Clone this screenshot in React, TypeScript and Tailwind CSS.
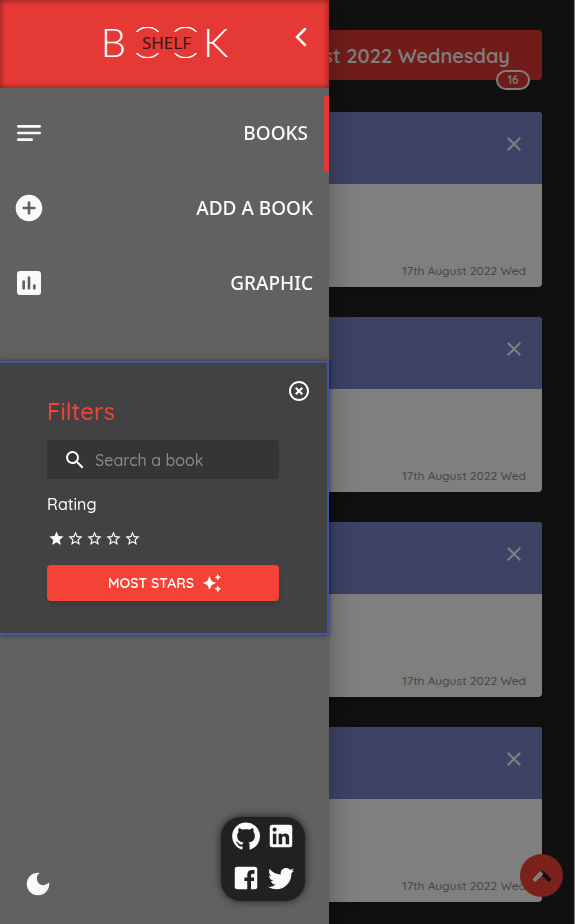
import { useState } from "react";
import type { ReactNode } from "react";
import {
  MdAutoAwesome,
  MdClose,
  MdDarkMode,
  MdHighlightOff,
  MdSearch,
  MdStar,
  MdStarBorder,
} from "react-icons/md";

const books = [
  { id: 1, added: "17th August 2022 Wed" },
  { id: 2, added: "17th August 2022 Wed" },
  { id: 3, added: "17th August 2022 Wed" },
  { id: 4, added: "17th August 2022 Wed" },
];

function Icon({ size, children }: { size: number; children: ReactNode }) {
  return (
    <svg width={size} height={size} viewBox="0 0 24 24" fill="currentColor" aria-hidden="true">
      {children}
    </svg>
  );
}

const navItems = [
  {
    label: "BOOKS",
    active: true,
    icon: (
      <path d="M4 18h10c.55 0 1-.45 1-1s-.45-1-1-1H4c-.55 0-1 .45-1 1s.45 1 1 1zM3 7c0 .55.45 1 1 1h16c.55 0 1-.45 1-1s-.45-1-1-1H4c-.55 0-1 .45-1 1zm1 6h16c.55 0 1-.45 1-1s-.45-1-1-1H4c-.55 0-1 .45-1 1s.45 1 1 1z" />
    ),
  },
  {
    label: "ADD A BOOK",
    active: false,
    icon: (
      <path d="M12 2C6.48 2 2 6.48 2 12s4.48 10 10 10 10-4.48 10-10S17.52 2 12 2zm4 11h-3v3c0 .55-.45 1-1 1s-1-.45-1-1v-3H8c-.55 0-1-.45-1-1s.45-1 1-1h3V8c0-.55.45-1 1-1s1 .45 1 1v3h3c.55 0 1 .45 1 1s-.45 1-1 1z" />
    ),
  },
  {
    label: "GRAPHIC",
    active: false,
    icon: (
      <path d="M19 3H5c-1.100 0-2 .9-2 2v14c0 1.100.9 2 2 2h14c1.100 0 2-.9 2-2V5c0-1.100-.9-2-2-2zM8 17c-.55 0-1-.45-1-1v-5c0-.55.45-1 1-1s1 .45 1 1v5c0 .55-.45 1-1 1zm4 0c-.55 0-1-.45-1-1V8c0-.55.45-1 1-1s1 .45 1 1v8c0 .55-.45 1-1 1zm4 0c-.55 0-1-.45-1-1v-2c0-.55.45-1 1-1s1 .45 1 1v2c0 .55-.45 1-1 1z" />
    ),
  },
];

const socials = [
  {
    name: "GitHub",
    path: "M12 1.27a11 11 0 00-3.48 21.46c.55.09.73-.28.73-.55v-1.84c-3.03.64-3.67-1.46-3.67-1.46-.55-1.29-1.28-1.65-1.28-1.65-.92-.65.1-.65.1-.65 1.1 0 1.73 1.1 1.73 1.1.92 1.65 2.57 1.2 3.21.92a2 2 0 01.64-1.47c-2.47-.27-5.04-1.19-5.04-5.5 0-1.1.46-2.1 1.2-2.84a3.76 3.76 0 010-2.93s.91-.28 3.11 1.1c1.8-.49 3.7-.49 5.5 0 2.1-1.38 3.02-1.1 3.02-1.1a3.76 3.76 0 01.1 2.93c.83.74 1.2 1.74 1.2 2.94 0 4.21-2.57 5.13-5.04 5.4.45.37.82.92.82 2.02v3.03c0 .27.1.64.73.55A11 11 0 0012 1.27",
  },
  {
    name: "LinkedIn",
    path: "M19 3a2 2 0 0 1 2 2v14a2 2 0 0 1-2 2H5a2 2 0 0 1-2-2V5a2 2 0 0 1 2-2h14m-.5 15.5v-5.3a3.26 3.26 0 0 0-3.26-3.26c-.85 0-1.84.52-2.32 1.3v-1.11h-2.79v8.37h2.79v-4.93c0-.77.62-1.4 1.39-1.4a1.4 1.4 0 0 1 1.4 1.4v4.93h2.79M6.88 8.56a1.68 1.68 0 0 0 1.68-1.68c0-.93-.75-1.69-1.68-1.69a1.69 1.69 0 0 0-1.69 1.69c0 .93.76 1.68 1.69 1.68m1.39 9.94v-8.37H5.5v8.37h2.77z",
  },
  {
    name: "Facebook",
    path: "M5 3h14a2 2 0 0 1 2 2v14a2 2 0 0 1-2 2h-3v-6.700h2.500V11.500H16V9.800c0-.7.5-1.300 1.200-1.300h1.600V5.500h-2.300c-2 0-3.500 1.600-3.500 3.600v2.400h-2.300v2.800H13V21H5a2 2 0 0 1-2-2V5a2 2 0 0 1 2-2z",
  },
  {
    name: "Twitter",
    path: "M22.46 6c-.77.35-1.6.58-2.46.69.88-.53 1.56-1.37 1.88-2.38-.83.5-1.75.85-2.72 1.05C18.37 4.5 17.26 4 16 4c-2.35 0-4.27 1.92-4.27 4.29 0 .34.04.67.11.98C8.28 9.09 5.11 7.38 3 4.79c-.37.63-.58 1.37-.58 2.15 0 1.49.75 2.81 1.91 3.56-.71 0-1.37-.2-1.95-.5v.03c0 2.08 1.48 3.82 3.44 4.21a4.22 4.22 0 0 1-1.93.07 4.28 4.28 0 0 0 4 2.98 8.521 8.521 0 0 1-5.33 1.84c-.34 0-.68-.02-1.02-.06C3.44 20.29 5.7 21 8.12 21 16 21 20.33 14.46 20.33 8.79c0-.19 0-.37-.01-.56.84-.6 1.56-1.36 2.14-2.23z",
  },
];

function Shelf() {
  return (
    <main className="flex min-h-screen flex-col border-r border-white bg-[#212121] px-8 pt-[30px] pb-5">
      <header className="relative flex h-[50px] items-center justify-end rounded bg-[#e53935] pt-0.5 pr-8">
        <h1 className="text-xl leading-7 font-semibold whitespace-nowrap text-white">
          17th August 2022 Wednesday
        </h1>
        <span className="absolute right-3 -bottom-2.5 flex h-5 w-[34px] items-center justify-center rounded-full border-2 border-white bg-[#e53935] text-xs font-semibold text-white">
          16
        </span>
      </header>
      <div className="mt-8 flex flex-col gap-[30px]">
        {books.map((book) => (
          <article key={book.id} className="overflow-hidden rounded bg-white shadow-md">
            <div className="flex h-[72px] justify-end bg-[#7986cb] pt-5 pr-4">
              <button type="button" aria-label="Remove book" className="h-6 w-6 text-white">
                <MdClose size={24} />
              </button>
            </div>
            <div className="flex h-[103px] items-end justify-end px-4 pb-1.5">
              <time className="text-xs leading-5 font-medium text-[#8c8c8c]">{book.added}</time>
            </div>
          </article>
        ))}
      </div>
    </main>
  );
}

function ScrollTop() {
  return (
    <button
      type="button"
      aria-label="Back to top"
      className="fixed right-3 bottom-[27px] flex h-[43px] w-[43px] items-center justify-center rounded-full bg-[#f44336]"
    >
      <svg width="24" height="24" viewBox="0 0 24 24" fill="none" strokeWidth="4" aria-hidden="true">
        <path d="M5 15.500 12 8.500" stroke="#fff" strokeLinecap="round" />
        <path d="M12 8.500 19 15.500" stroke="#212121" strokeLinecap="round" />
        <path d="M8 12.500 12 8.500" stroke="#fff" />
      </svg>
    </button>
  );
}

function Rings({ flipped = false }: { flipped?: boolean }) {
  return (
    <svg
      width="65"
      height="5"
      viewBox="0 0 65 5"
      fill="none"
      stroke="currentColor"
      strokeWidth="1.6"
      className={flipped ? "rotate-180" : ""}
      aria-hidden="true"
    >
      <path d="M2.500 5a15 15 0 0 1 22 0M40.500 5a15 15 0 0 1 22 0" />
    </svg>
  );
}

function Logo() {
  return (
    <div className="flex items-center font-['Lato',sans-serif] text-[40px] leading-[48px] font-light text-white">
      <span>B</span>
      <div className="mr-1 ml-2 flex flex-col items-center">
        <Rings />
        <span className="flex h-[21px] items-center font-['Noto_Sans',sans-serif] text-[17px] leading-none font-normal text-[#3a1414]">
          SHELF
        </span>
        <Rings flipped />
      </div>
      <span>K</span>
    </div>
  );
}

function Filters() {
  const [rating, setRating] = useState(1);
  return (
    <section className="mt-10 border-2 border-l-0 border-[#4553a6] bg-[#424242] pb-8 shadow-[0_0_5px_rgba(0,0,0,0.5)]">
      <div className="flex items-start justify-between pt-4 pr-4 pl-[47px]">
        <h2 className="mt-4 text-2xl leading-8 font-medium text-[#f44336]">Filters</h2>
        <button type="button" aria-label="Close filters" className="text-white">
          <MdHighlightOff size={24} />
        </button>
      </div>
      <div className="mr-12 ml-[47px]">
        <label className="mt-[13px] flex h-[39px] items-center gap-2 rounded bg-[#353535] pl-4 text-white">
          <MdSearch size={24} className="shrink-0" />
          <input
            type="search"
            aria-label="Search a book"
            placeholder="Search a book"
            className="min-w-0 flex-1 bg-transparent text-base font-medium outline-none placeholder:text-[#8a8a8a]"
          />
        </label>
        <fieldset className="mt-[13px]">
          <legend className="text-base font-medium text-white">Rating</legend>
          <div className="mt-[14px] flex gap-[2px] pl-[1px] text-white">
            {[1, 2, 3, 4, 5].map((value) => (
              <label key={value} className="relative h-[17px] w-[17px] cursor-pointer">
                <input
                  type="radio"
                  name="rating"
                  value={value}
                  aria-label={`${value} stars`}
                  checked={rating === value}
                  onChange={() => setRating(value)}
                  className="sr-only"
                />
                {value <= rating ? <MdStar size={17} /> : <MdStarBorder size={17} />}
              </label>
            ))}
          </div>
        </fieldset>
        <button
          type="button"
          className="mt-[18px] flex h-9 w-full items-center justify-center gap-2 rounded bg-[#f44336] text-sm font-semibold text-white shadow-md"
        >
          MOST STARS
          <MdAutoAwesome size={20} className="-mr-1" />
        </button>
      </div>
    </section>
  );
}

function Drawer() {
  return (
    <aside className="fixed inset-y-0 left-0 flex w-[329px] max-w-full flex-col bg-[#616161] shadow-[0_8px_10px_-5px_rgba(0,0,0,0.2),0_16px_24px_2px_rgba(0,0,0,0.14),0_6px_30px_5px_rgba(0,0,0,0.12)]">
      <div className="grid h-[88px] shrink-0 grid-cols-[1fr_auto_1fr] items-center bg-[#e53935] pb-1 shadow-[inset_0_0_6px_rgba(0,0,0,0.5)]">
        <span />
        <Logo />
        <button type="button" aria-label="Close menu" className="mr-4 mt-[25px] self-start justify-self-end text-white">
          <svg width="24" height="24" viewBox="0 0 24 24" fill="none" stroke="currentColor" strokeWidth="2.500" strokeLinecap="round" aria-hidden="true">
            <path d="M16 4 8 12l8 8" />
          </svg>
        </button>
      </div>
      <nav className="pt-2">
        {navItems.map((item) => (
          <a
            key={item.label}
            href="#"
            className={
              item.active
                ? "flex h-[75px] items-center justify-between border-r-[5px] border-[#e53935] pr-4 pb-0.5 pl-[13px] text-[#fafafa]"
                : "flex h-[75px] items-center justify-between pr-4 pb-0.5 pl-[13px] text-[#fafafa]"
            }
          >
            <Icon size={32}>{item.icon}</Icon>
            <span className="font-['Noto_Sans',sans-serif] text-[19px] leading-7 font-medium">{item.label}</span>
          </a>
        ))}
      </nav>
      <Filters />
      <div className="mt-auto flex items-end justify-between pr-6 pb-[23px] pl-[23px]">
        <button type="button" aria-label="Toggle dark mode" className="mb-0.5 text-[#fafafa]">
          <MdDarkMode size={30} />
        </button>
        <div className="grid h-[84px] w-[84px] grid-cols-2 rounded-[20px] bg-[#212121] px-[7px] text-[#fafafa] shadow-[0_0_8px_rgba(0,0,0,0.7)]">
          {socials.map((social) => (
            <a key={social.name} href="#" aria-label={social.name} className="flex items-start justify-center pt-1">
              <Icon size={30}>
                <path d={social.path} />
              </Icon>
            </a>
          ))}
        </div>
      </div>
    </aside>
  );
}

export default function App() {
  return (
    <div className="font-['Quicksand','Lato',sans-serif]">
      <Shelf />
      <ScrollTop />
      <div className="fixed inset-0 bg-black/50" />
      <Drawer />
    </div>
  );
}
